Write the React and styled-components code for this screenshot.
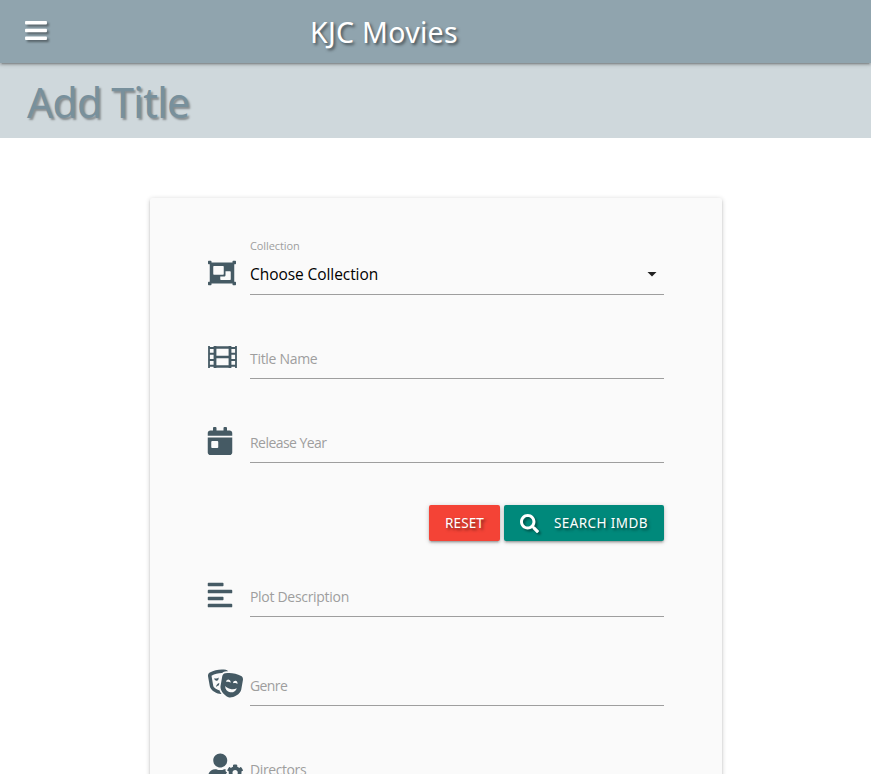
import React from 'react';
import styled, { createGlobalStyle } from 'styled-components';
import {
  FaAlignLeft,
  FaBars,
  FaCalendarDay,
  FaObjectGroup,
  FaSearch,
  FaTheaterMasks,
  FaUserCog,
} from 'react-icons/fa';

const GlobalStyle = createGlobalStyle`
  *, *::before, *::after { box-sizing: border-box; }
  html { overflow: hidden; }
  body {
    margin: 0;
    height: 100vh;
    overflow: hidden;
    background: #fff;
    color: rgba(0, 0, 0, 0.87);
    font-family: "Open Sans", "Noto Sans", sans-serif;
    font-size: 14px;
  }
`;

const NavBar = styled.nav`
  position: relative;
  display: flex;
  align-items: center;
  height: 63px;
  padding: 1px 0 0 24px;
  background: #90a4ae;
  color: #fff;
  box-shadow: 0 2px 2px 0 rgba(0, 0, 0, 0.14), 0 3px 1px -2px rgba(0, 0, 0, 0.12),
    0 1px 5px 0 rgba(0, 0, 0, 0.2);
`;

const MenuButton = styled.button`
  display: flex;
  width: 24px;
  height: 26px;
  margin: 0 262px 2px 0;
  padding: 0;
  border: 0;
  background: none;
  color: inherit;
  font-size: 25px;
  filter: drop-shadow(2px 2px 1px rgba(0, 0, 0, 0.4));
`;

const Brand = styled.a`
  font-family: "Noto Sans", sans-serif;
  font-size: 28.5px;
  line-height: 62px;
  letter-spacing: 0.3px;
  white-space: nowrap;
  text-shadow: 2px 2px 3px rgba(0, 0, 0, 0.5);
`;

const PageHeader = styled.header`
  height: 75px;
  padding: 2px 0 0 27px;
  background: #cfd8dc;
`;

const PageTitle = styled.h1`
  margin: 0;
  color: #78909c;
  font-family: "Noto Sans", sans-serif;
  font-size: 41px;
  font-weight: 400;
  line-height: 74px;
  letter-spacing: -0.75px;
  white-space: nowrap;
  text-shadow: 2px 2px 2px rgba(0, 0, 0, 0.35);
`;

const Card = styled.main`
  width: 572px;
  height: 700px;
  margin: 60px 0 0 150px;
  padding: 13px 58px 0;
  border-radius: 2px;
  background: #fafafa;
  box-shadow: 0 2px 2px 0 rgba(0, 0, 0, 0.14), 0 3px 1px -2px rgba(0, 0, 0, 0.12),
    0 1px 5px 0 rgba(0, 0, 0, 0.2);
`;

const FieldRow = styled.div`
  display: grid;
  grid-template-columns: 42px 414px;
  align-items: end;
  height: ${({ $height }) => $height || 84}px;
`;

const FieldIcon = styled.span`
  display: flex;
  align-items: center;
  height: 28px;
  margin-bottom: 8.5px;
  color: #455a64;
  font-size: 28px;

  svg { flex: none; }
`;

const NarrowIcon = styled.span`
  display: flex;
  margin-left: -1.75px;
`;

const WideIcon = styled.span`
  display: flex;
  font-size: 35px;
`;

const FieldControl = styled.div`
  display: flex;
  align-items: center;
  justify-content: space-between;
  height: 42px;
  padding: ${({ $select }) => ($select ? 1 : 3)}px 7px 0 0;
  border-bottom: 1px solid #9e9e9e;
`;

const FieldLabel = styled.label`
  color: #9e9e9e;
  font-size: 14px;
  line-height: 20px;
  letter-spacing: ${({ $spacing }) => $spacing ?? -0.3}px;
  white-space: nowrap;
`;

const SelectColumn = styled.div`
  display: flex;
  flex-direction: column;
`;

const SmallLabel = styled.label`
  height: 14px;
  color: #9e9e9e;
  font-size: 11px;
  line-height: 14px;
  letter-spacing: -0.1px;
`;

const SelectValue = styled.span`
  color: #000;
  font-size: 15.5px;
  line-height: 22px;
  letter-spacing: -0.07px;
  white-space: nowrap;
`;

const Caret = styled.span`
  width: 10px;
  height: 5px;
  background: #212121;
  clip-path: polygon(0 0, 100% 0, 50% 100%);
`;

const Actions = styled.div`
  display: flex;
  justify-content: flex-end;
  gap: 4px;
  height: 78px;
  padding-top: 42px;
`;

const Button = styled.button`
  display: flex;
  align-items: center;
  justify-content: ${({ $wide }) => ($wide ? 'flex-start' : 'center')};
  gap: 15px;
  width: ${({ $wide }) => ($wide ? 160 : 71)}px;
  height: 36px;
  padding: ${({ $wide }) => ($wide ? '0 0 0 16px' : 0)};
  border: 0;
  border-radius: 2px;
  background: ${({ $wide }) => ($wide ? '#00897b' : '#f44336')};
  color: #fff;
  font-family: "Noto Sans", sans-serif;
  font-size: 13.5px;
  letter-spacing: ${({ $wide }) => ($wide ? 0.4 : 0.15)}px;
  white-space: nowrap;
  text-shadow: 2px 2px 3px rgba(0, 0, 0, 0.5);
  box-shadow: 0 2px 2px 0 rgba(0, 0, 0, 0.14), 0 3px 1px -2px rgba(0, 0, 0, 0.12),
    0 1px 5px 0 rgba(0, 0, 0, 0.2);

  svg {
    flex: none;
    font-size: 19px;
    filter: drop-shadow(2px 2px 1px rgba(0, 0, 0, 0.4));
  }
`;

function FilmIcon() {
  return (
    <svg width="29" height="22" viewBox="0 0 29 22" fill="none" stroke="currentColor">
      <path d="M1 0V22M28 0V22" strokeWidth="1.8" />
      <path d="M7 0V22M22 0V22" strokeWidth="2.8" />
      <path d="M6 1.4H23M6 10.9H23M6 20.4H23" strokeWidth="2.5" />
      <path d="M1 2H7M1 7.8H7M1 13.9H7M1 19.8H7M22 2H28M22 7.8H28M22 13.9H28M22 19.8H28" strokeWidth="2" />
    </svg>
  );
}

function TextField({ icon, label, height, spacing }) {
  return (
    <FieldRow $height={height}>
      <FieldIcon>{icon}</FieldIcon>
      <FieldControl>
        <FieldLabel $spacing={spacing}>{label}</FieldLabel>
      </FieldControl>
    </FieldRow>
  );
}

export default function App() {
  return (
    <>
      <GlobalStyle />
      <NavBar>
        <MenuButton aria-label="Menu"><FaBars /></MenuButton>
        <Brand>KJC Movies</Brand>
      </NavBar>
      <PageHeader>
        <PageTitle>Add Title</PageTitle>
      </PageHeader>
      <Card>
        <FieldRow>
          <FieldIcon><FaObjectGroup /></FieldIcon>
          <SelectColumn>
            <SmallLabel>Collection</SmallLabel>
            <FieldControl $select>
              <SelectValue>Choose Collection</SelectValue>
              <Caret />
            </FieldControl>
          </SelectColumn>
        </FieldRow>
        <TextField icon={<FilmIcon />} label="Title Name" />
        <TextField icon={<NarrowIcon><FaCalendarDay /></NarrowIcon>} label="Release Year" spacing={-0.55} />
        <Actions>
          <Button>RESET</Button>
          <Button $wide><FaSearch />SEARCH IMDB</Button>
        </Actions>
        <TextField icon={<NarrowIcon><FaAlignLeft /></NarrowIcon>} label="Plot Description" height={76} />
        <TextField icon={<WideIcon><FaTheaterMasks /></WideIcon>} label="Genre" height={89} spacing={-0.6} />
        <TextField icon={<WideIcon><FaUserCog /></WideIcon>} label="Directors" spacing={-0.4} />
      </Card>
    </>
  );
}
